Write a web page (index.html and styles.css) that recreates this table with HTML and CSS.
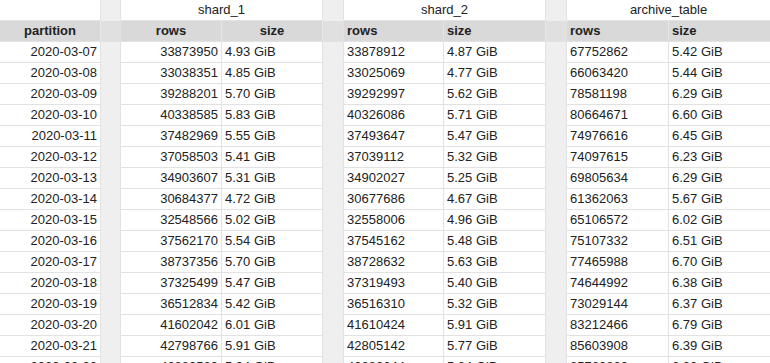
FILE: index.html
```html
<!DOCTYPE html>
<html>
<head>
<meta charset="utf-8">
<link rel="stylesheet" href="styles.css">
</head>
<body>
<table class="sheet">
  <colgroup>
    <col class="c-part"><col class="c-gap"><col class="c-101"><col class="c-101"><col class="c-gap21"><col class="c-100"><col class="c-102"><col class="c-gap21"><col class="c-102"><col class="c-101">
  </colgroup>
  <thead>
    <tr class="group">
      <th></th><th class="gap"></th>
      <th colspan="2">shard_1</th><th class="gap"></th>
      <th colspan="2">shard_2</th><th class="gap"></th>
      <th colspan="2">archive_table</th>
    </tr>
    <tr class="fields">
      <th class="center">partition</th><th class="gap"></th>
      <th class="center">rows</th><th class="center">size</th><th class="gap"></th>
      <th>rows</th><th>size</th><th class="gap"></th>
      <th>rows</th><th>size</th>
    </tr>
  </thead>
  <tbody>
    <tr><td class="num">2020-03-07</td><td class="gap"></td><td class="num">33873950</td><td>4.93 GiB</td><td class="gap"></td><td>33878912</td><td>4.87 GiB</td><td class="gap"></td><td>67752862</td><td>5.42 GiB</td></tr>
    <tr><td class="num">2020-03-08</td><td class="gap"></td><td class="num">33038351</td><td>4.85 GiB</td><td class="gap"></td><td>33025069</td><td>4.77 GiB</td><td class="gap"></td><td>66063420</td><td>5.44 GiB</td></tr>
    <tr><td class="num">2020-03-09</td><td class="gap"></td><td class="num">39288201</td><td>5.70 GiB</td><td class="gap"></td><td>39292997</td><td>5.62 GiB</td><td class="gap"></td><td>78581198</td><td>6.29 GiB</td></tr>
    <tr><td class="num">2020-03-10</td><td class="gap"></td><td class="num">40338585</td><td>5.83 GiB</td><td class="gap"></td><td>40326086</td><td>5.71 GiB</td><td class="gap"></td><td>80664671</td><td>6.60 GiB</td></tr>
    <tr><td class="num">2020-03-11</td><td class="gap"></td><td class="num">37482969</td><td>5.55 GiB</td><td class="gap"></td><td>37493647</td><td>5.47 GiB</td><td class="gap"></td><td>74976616</td><td>6.45 GiB</td></tr>
    <tr><td class="num">2020-03-12</td><td class="gap"></td><td class="num">37058503</td><td>5.41 GiB</td><td class="gap"></td><td>37039112</td><td>5.32 GiB</td><td class="gap"></td><td>74097615</td><td>6.23 GiB</td></tr>
    <tr><td class="num">2020-03-13</td><td class="gap"></td><td class="num">34903607</td><td>5.31 GiB</td><td class="gap"></td><td>34902027</td><td>5.25 GiB</td><td class="gap"></td><td>69805634</td><td>6.29 GiB</td></tr>
    <tr><td class="num">2020-03-14</td><td class="gap"></td><td class="num">30684377</td><td>4.72 GiB</td><td class="gap"></td><td>30677686</td><td>4.67 GiB</td><td class="gap"></td><td>61362063</td><td>5.67 GiB</td></tr>
    <tr><td class="num">2020-03-15</td><td class="gap"></td><td class="num">32548566</td><td>5.02 GiB</td><td class="gap"></td><td>32558006</td><td>4.96 GiB</td><td class="gap"></td><td>65106572</td><td>6.02 GiB</td></tr>
    <tr><td class="num">2020-03-16</td><td class="gap"></td><td class="num">37562170</td><td>5.54 GiB</td><td class="gap"></td><td>37545162</td><td>5.48 GiB</td><td class="gap"></td><td>75107332</td><td>6.51 GiB</td></tr>
    <tr><td class="num">2020-03-17</td><td class="gap"></td><td class="num">38737356</td><td>5.70 GiB</td><td class="gap"></td><td>38728632</td><td>5.63 GiB</td><td class="gap"></td><td>77465988</td><td>6.70 GiB</td></tr>
    <tr><td class="num">2020-03-18</td><td class="gap"></td><td class="num">37325499</td><td>5.47 GiB</td><td class="gap"></td><td>37319493</td><td>5.40 GiB</td><td class="gap"></td><td>74644992</td><td>6.38 GiB</td></tr>
    <tr><td class="num">2020-03-19</td><td class="gap"></td><td class="num">36512834</td><td>5.42 GiB</td><td class="gap"></td><td>36516310</td><td>5.32 GiB</td><td class="gap"></td><td>73029144</td><td>6.37 GiB</td></tr>
    <tr><td class="num">2020-03-20</td><td class="gap"></td><td class="num">41602042</td><td>6.01 GiB</td><td class="gap"></td><td>41610424</td><td>5.91 GiB</td><td class="gap"></td><td>83212466</td><td>6.79 GiB</td></tr>
    <tr><td class="num">2020-03-21</td><td class="gap"></td><td class="num">42798766</td><td>5.91 GiB</td><td class="gap"></td><td>42805142</td><td>5.77 GiB</td><td class="gap"></td><td>85603908</td><td>6.39 GiB</td></tr>
    <tr><td class="num">2020-03-22</td><td class="gap"></td><td class="num">42880589</td><td>5.94 GiB</td><td class="gap"></td><td>42883244</td><td>5.84 GiB</td><td class="gap"></td><td>85763833</td><td>6.30 GiB</td></tr>
  </tbody>
</table>
</body>
</html>
```
FILE: styles.css
```css
html, body {
  margin: 0;
  padding: 0;
  background: #ffffff;
  overflow: hidden;
}

.sheet {
  border-collapse: separate;
  border-spacing: 0;
  table-layout: fixed;
  width: 770px;
  font-family: "Liberation Sans", Arial, sans-serif;
  font-size: 13px;
  color: #222222;
}

.c-part { width: 101px; }
.c-gap { width: 20px; }
.c-gap21 { width: 21px; }
.c-100 { width: 100px; }
.c-101 { width: 101px; }
.c-102 { width: 102px; }

.sheet th,
.sheet td {
  height: 20px;
  padding: 0 3px;
  line-height: 20px;
  border-right: 1px solid #e2e2e2;
  border-bottom: 1px solid #e2e2e2;
  white-space: nowrap;
  overflow: hidden;
  text-align: left;
  vertical-align: middle;
  box-sizing: content-box;
}

.sheet th:last-child,
.sheet td:last-child {
  border-right: none;
}

.group th {
  font-weight: normal;
  text-align: center;
  background: #ffffff;
}

.fields th {
  font-weight: bold;
  background: #d9d9d9;
  border-bottom-color: #e2e2e2;
  border-right-color: #e6e6e6;
}

.fields th.center {
  text-align: center;
}

.sheet td.num {
  text-align: right;
}

.sheet .gap {
  padding: 0;
  background: #efefef;
  border-bottom-color: #efefef;
  border-right-color: #e2e2e2;
}

.fields th.gap {
  background: #e0e0e0;
  border-bottom-color: #e2e2e2;
}
```
